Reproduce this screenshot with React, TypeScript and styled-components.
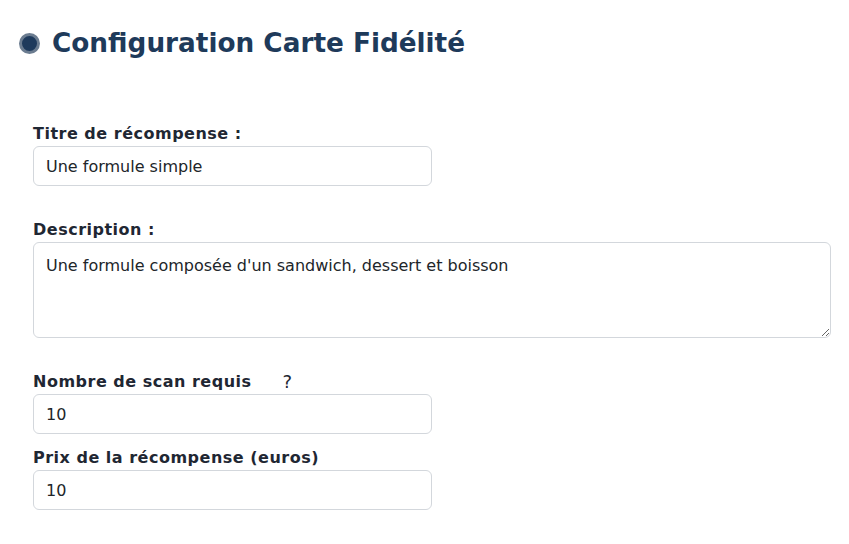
import styled, { createGlobalStyle } from "styled-components";

const GlobalStyle = createGlobalStyle`
  body {
    margin: 0;
    background: #ffffff;
    font-family: "DejaVu Sans", sans-serif;
    color: #212529;
  }
`;

const Page = styled.div`
  padding: 26px 0 0 19px;
`;

const Header = styled.div`
  display: flex;
  align-items: center;
  gap: 12px;
`;

const Bullet = styled.span`
  width: 15px;
  height: 15px;
  border-radius: 50%;
  background: #1e3a5c;
  border: 3px solid #6b7c90;
`;

const Title = styled.h1`
  margin: 0;
  font-size: 26.3px;
  font-weight: bold;
  color: #1e3a5a;
  line-height: 34px;
`;

const Form = styled.form`
  display: flex;
  flex-direction: column;
  padding: 62px 19px 0 14px;
`;

const Group = styled.div<{ $gap: number }>`
  display: flex;
  flex-direction: column;
  margin-top: ${(p) => p.$gap}px;
`;

const Label = styled.label`
  display: flex;
  align-items: center;
  font-size: 16px;
  font-weight: bold;
  letter-spacing: 0.5px;
  line-height: 24px;
  color: #1f2733;
`;

const Help = styled.span`
  margin-left: 31px;
  font-size: 18px;
  font-weight: normal;
  letter-spacing: 0;
  line-height: 20px;
`;

const Input = styled.input`
  box-sizing: border-box;
  width: 399px;
  height: 40px;
  padding: 0 12px;
  border: 1px solid #d3d7dc;
  border-radius: 6px;
  font-family: "DejaVu Sans", sans-serif;
  font-size: 16px;
  color: #212529;
  outline: none;
`;

const TextArea = styled.textarea`
  box-sizing: border-box;
  width: 798px;
  height: 96px;
  padding: 12px 12px;
  border: 1px solid #d3d7dc;
  border-radius: 6px;
  font-family: "DejaVu Sans", sans-serif;
  font-size: 16px;
  line-height: 22px;
  color: #212529;
  outline: none;
`;

export default function App() {
  return (
    <>
      <GlobalStyle />
      <Page>
        <Header>
          <Bullet />
          <Title>Configuration Carte Fidélité</Title>
        </Header>
        <Form>
          <Group $gap={0}>
            <Label>Titre de récompense :</Label>
            <Input defaultValue="Une formule simple" />
          </Group>
          <Group $gap={32}>
            <Label>Description :</Label>
            <TextArea defaultValue="Une formule composée d'un sandwich, dessert et boisson" />
          </Group>
          <Group $gap={32}>
            <Label>
              Nombre de scan requis<Help>?</Help>
            </Label>
            <Input defaultValue="10" />
          </Group>
          <Group $gap={12}>
            <Label>Prix de la récompense (euros)</Label>
            <Input defaultValue="10" />
          </Group>
        </Form>
      </Page>
    </>
  );
}
